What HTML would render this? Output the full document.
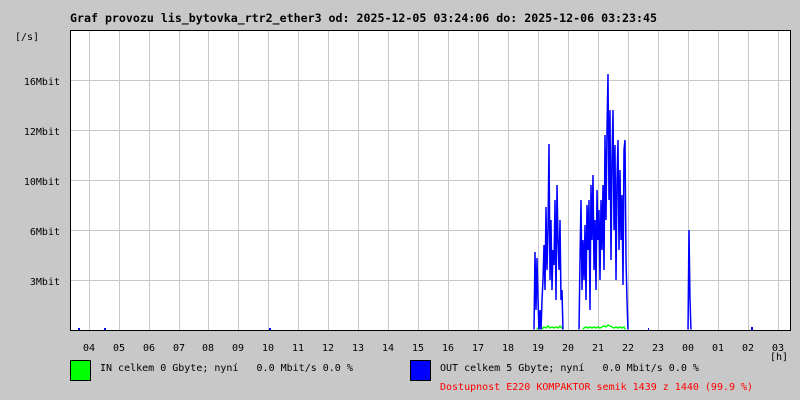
<!DOCTYPE html>
<html><head><meta charset="utf-8"><style>
html,body{margin:0;padding:0;background:#c8c8c8;width:800px;height:400px;overflow:hidden}
svg{display:block}
text{font-family:"DejaVu Sans Mono","Liberation Mono",monospace;font-size:10px;fill:#000;white-space:pre}
</style></head><body>
<svg width="800" height="400" viewBox="0 0 800 400" xmlns="http://www.w3.org/2000/svg" xml:space="preserve">
<defs><clipPath id="c"><rect x="71" y="30" width="719" height="299.5"/></clipPath></defs>
<rect width="800" height="400" fill="#c8c8c8"/>
<text x="70" y="22" style="font-weight:bold;font-size:11.5px" textLength="587" lengthAdjust="spacingAndGlyphs">Graf provozu lis_bytovka_rtr2_ether3 od: 2025-12-05 03:24:06 do: 2025-12-06 03:23:45</text>
<rect x="70" y="30" width="720" height="300" fill="#fff"/>
<g stroke="#c8c8c8" stroke-width="1">
<path d="M89.5 30V330M119.5 30V330M149.5 30V330M179.5 30V330M208.5 30V330M238.5 30V330M268.5 30V330M298.5 30V330M328.5 30V330M358.5 30V330M388.5 30V330M418.5 30V330M448.5 30V330M478.5 30V330M508.5 30V330M538.5 30V330M568.5 30V330M598.5 30V330M628.5 30V330M658.5 30V330M688.5 30V330M718.5 30V330M748.5 30V330M778.5 30V330"/>
<path d="M70 80.5H790M70 130.5H790M70 180.5H790M70 230.5H790M70 280.5H790"/>
</g>
<g clip-path="url(#c)">
<polyline fill="none" stroke="#00ff00" stroke-width="1.5" points="536,331 538,328 540,326 542,329 544,327 546,328 548,326 550,328 552,327 554,328 556,327 558,328 560,326 562,328 564,331"/>
<polyline fill="none" stroke="#00ff00" stroke-width="1.5" points="582,331 584,328 586,327 588,328 590,327 592,328 594,327 596,328 598,327 600,328 602,327 604,326 606,327 608,325 610,326 612,327 614,328 616,327 618,328 620,327 622,328 624,327 626,331"/>
<polyline fill="none" stroke="#0000ff" stroke-width="1.5" points="534,331 535,252 536,310 537,258 538,300 539,331 540,310 541,331 542,300 543,280 544,245 545,290 546,207 547,270 548,230 549,144 550,280 551,220 552,290 553,250 554,265 555,200 556,300 557,185 558,240 559,270 560,220 561,300 562,290 563,331"/>
<polyline fill="none" stroke="#0000ff" stroke-width="1.5" points="579,331 580,260 581,200 582,290 583,240 584,280 585,225 586,300 587,205 588,250 589,200 590,310 591,185 592,240 593,175 594,270 595,220 596,290 597,190 598,240 599,210 600,280 601,200 602,250 603,185 604,270 605,135 606,220 607,130 608,74 609,200 610,110 611,260 612,160 613,110 614,230 615,145 616,280 617,180 618,140 619,250 620,170 621,240 622,195 623,285 624,150 625,140 626,260 627,300 628,331"/>
<polyline fill="none" stroke="#0000ff" stroke-width="1.5" points="688,331 689,230 690,300 691,331"/>
</g>
<g fill="#0000ff"><rect x="78" y="328" width="2" height="2"/><rect x="104" y="328" width="2" height="2"/><rect x="269" y="328" width="2" height="2"/><rect x="648" y="328" width="1" height="2"/><rect x="751" y="327" width="2" height="3"/></g>
<path d="M70.5 30V330.5H790.5V30" fill="none" stroke="#000" stroke-width="1"/>
<path d="M70 30.5H790" stroke="#000"/>
<g text-anchor="end"><text x="60" y="85">16Mbit</text><text x="60" y="135">12Mbit</text><text x="60" y="185">10Mbit</text><text x="60" y="235">6Mbit</text><text x="60" y="285">3Mbit</text></g>
<text x="15" y="40">[/s]</text>
<g text-anchor="middle"><text x="89" y="351">04</text><text x="119" y="351">05</text><text x="149" y="351">06</text><text x="179" y="351">07</text><text x="208" y="351">08</text><text x="238" y="351">09</text><text x="268" y="351">10</text><text x="298" y="351">11</text><text x="328" y="351">12</text><text x="358" y="351">13</text><text x="388" y="351">14</text><text x="418" y="351">15</text><text x="448" y="351">16</text><text x="478" y="351">17</text><text x="508" y="351">18</text><text x="538" y="351">19</text><text x="568" y="351">20</text><text x="598" y="351">21</text><text x="628" y="351">22</text><text x="658" y="351">23</text><text x="688" y="351">00</text><text x="718" y="351">01</text><text x="748" y="351">02</text><text x="778" y="351">03</text></g>
<text x="770" y="360">[h]</text>
<rect x="70.5" y="360.5" width="20" height="20" fill="#00ff00" stroke="#000"/>
<text x="100" y="371">IN celkem 0 Gbyte; nyní   0.0 Mbit/s 0.0 %</text>
<rect x="410.5" y="360.5" width="20" height="20" fill="#0000ff" stroke="#000"/>
<text x="440" y="371">OUT celkem 5 Gbyte; nyní   0.0 Mbit/s 0.0 %</text>
<text x="440" y="390" style="fill:#ff0000">Dostupnost E220 KOMPAKTOR semik 1439 z 1440 (99.9 %)</text>
</svg>
</body></html>
